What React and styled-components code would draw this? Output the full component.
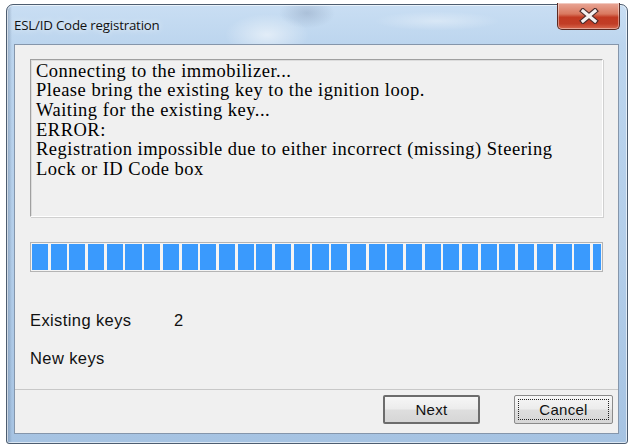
import React from "react";
import styled, { createGlobalStyle } from "styled-components";

const Global = createGlobalStyle`
  html, body { margin: 0; padding: 0; background: #ffffff; }
  body { width: 632px; height: 446px; overflow: hidden; }
`;

const Window = styled.div`
  box-sizing: border-box;
  margin: 4px 0 0 6px;
  width: 622px;
  height: 440px;
  display: flex;
  flex-direction: column;
  padding: 0 8px 9px 7px;
  border: 1px solid #4d5d70;
  border-radius: 7px 7px 3px 3px;
  background:
    radial-gradient(ellipse 60px 30px at 260px 30px, rgba(255,255,255,0.55), transparent 70%),
    radial-gradient(ellipse 40px 22px at 300px 8px, rgba(120,140,170,0.35), transparent 70%),
    radial-gradient(ellipse 90px 14px at 430px 16px, rgba(255,255,255,0.35), transparent 70%),
    linear-gradient(90deg, rgba(60,80,110,0.35) 0px, transparent 5px),
    linear-gradient(180deg, #c9def3 0px, #bcd5ee 40px, #b2cde9 60%, #a6c3e2 100%);
  box-shadow: inset 0 0 0 1px rgba(255,255,255,0.6);
`;

const TitleBar = styled.div`
  height: 39px;
  display: flex;
  justify-content: space-between;
  align-items: flex-start;
`;

const Title = styled.div`
  margin-top: 10px;
  font-family: "Open Sans", "Noto Sans", sans-serif;
  font-size: 13.3px;
  letter-spacing: -0.2px;
  line-height: 20px;
  color: #111;
  text-shadow: 0 0 6px rgba(255,255,255,0.9);
`;

const CloseButton = styled.div`
  box-sizing: border-box;
  width: 63px;
  height: 27px;
  margin: -2px -1px 0 0;
  display: flex;
  align-items: center;
  justify-content: center;
  border: 1px solid #5b2a22;
  border-top: none;
  border-radius: 0 0 5px 5px;
  background: linear-gradient(180deg, #e9a797 0%, #d9785f 42%, #c23a22 55%, #c13d26 80%, #d86a50 100%);
  box-shadow: inset 0 0 0 1px rgba(255,255,255,0.4);
`;

const Client = styled.div`
  flex: 1;
  display: flex;
  flex-direction: column;
  border: 1px solid #8596ab;
  background: #f0f0f0;
`;

const Body = styled.div`
  flex: 1;
  display: flex;
  flex-direction: column;
  padding: 14px 15px 0 15px;
`;

const LogBox = styled.div`
  box-sizing: border-box;
  height: 158px;
  padding: 1.5px 5px 0 5px;
  border: 1px solid;
  border-color: #a0a0a0 #ffffff #ffffff #a0a0a0;
  box-shadow: inset 1px 1px 0 #dcdcdc, 1px 1px 0 #d0d0d0;
  font-family: "Liberation Serif", "Times New Roman", serif;
  font-size: 18.5px;
  letter-spacing: 0.5px;
  line-height: 19.7px;
  color: #000;
`;

const Progress = styled.div`
  box-sizing: border-box;
  margin-top: 25px;
  height: 30px;
  padding: 1px;
  border: 1px solid #b4b4b4;
  background: #f4f4f4;
`;

const Fill = styled.div`
  height: 100%;
  background: repeating-linear-gradient(
    to right,
    #3a9afd 0px,
    #3a9afd 16px,
    transparent 16px,
    transparent 18.7px
  );
`;

const KeyRow = styled.div`
  height: 38px;
  display: flex;
  align-items: center;
  margin-top: ${(p) => (p.$first ? "29px" : "0")};
  font-family: "Liberation Sans", Arial, sans-serif;
  font-size: 16.5px;
  letter-spacing: 0.4px;
  color: #111;
`;

const KeyLabel = styled.span`
  width: 144px;
`;

const Footer = styled.div`
  height: 44px;
  box-sizing: border-box;
  border-top: 1px solid #c8c8c8;
  display: flex;
  justify-content: flex-end;
  align-items: flex-start;
  gap: 34px;
  padding: 5px 5px 0 0;
`;

const Button = styled.div`
  box-sizing: border-box;
  width: ${(p) => p.$w}px;
  height: 29px;
  display: flex;
  align-items: center;
  justify-content: center;
  border: ${(p) => (p.$default ? "2px solid #6c6c6c" : "1px solid #8a8a8a")};
  border-radius: 2px;
  background: linear-gradient(180deg, #f6f6f6 0%, #ececec 48%, #dedede 52%, #d6d6d6 100%);
  font-family: "Liberation Sans", Arial, sans-serif;
  font-size: 15px;
  letter-spacing: 0.3px;
  color: #111;
  position: relative;
`;

const Focus = styled.span`
  box-sizing: border-box;
  position: absolute;
  inset: 3px;
  border: 1px dotted #222;
`;

const lines = [
  "Connecting to the immobilizer...",
  "Please bring the existing key to the ignition loop.",
  "Waiting for the existing key...",
  "ERROR:",
  "Registration impossible due to either incorrect (missing) Steering",
  "Lock or ID Code box",
];

export default function App() {
  return (
    <>
      <Global />
      <Window>
        <TitleBar>
          <Title>ESL/ID Code registration</Title>
          <CloseButton>
            <svg width="22" height="16" viewBox="0 0 22 16">
              <path d="M5 3 L17 13 M17 3 L5 13" stroke="#4a2a2a" strokeWidth="5.5" strokeLinecap="square" />
              <path d="M5 3 L17 13 M17 3 L5 13" stroke="#f4f0f0" strokeWidth="3.2" strokeLinecap="square" />
            </svg>
          </CloseButton>
        </TitleBar>
        <Client>
          <Body>
            <LogBox>
              {lines.map((l, i) => (
                <div key={i}>{l}</div>
              ))}
            </LogBox>
            <Progress>
              <Fill />
            </Progress>
            <KeyRow $first>
              <KeyLabel>Existing keys</KeyLabel>
              <span>2</span>
            </KeyRow>
            <KeyRow>
              <KeyLabel>New keys</KeyLabel>
            </KeyRow>
          </Body>
          <Footer>
            <Button $w={97} $default>
              Next
            </Button>
            <Button $w={99}>
              Cancel
              <Focus />
            </Button>
          </Footer>
        </Client>
      </Window>
    </>
  );
}
